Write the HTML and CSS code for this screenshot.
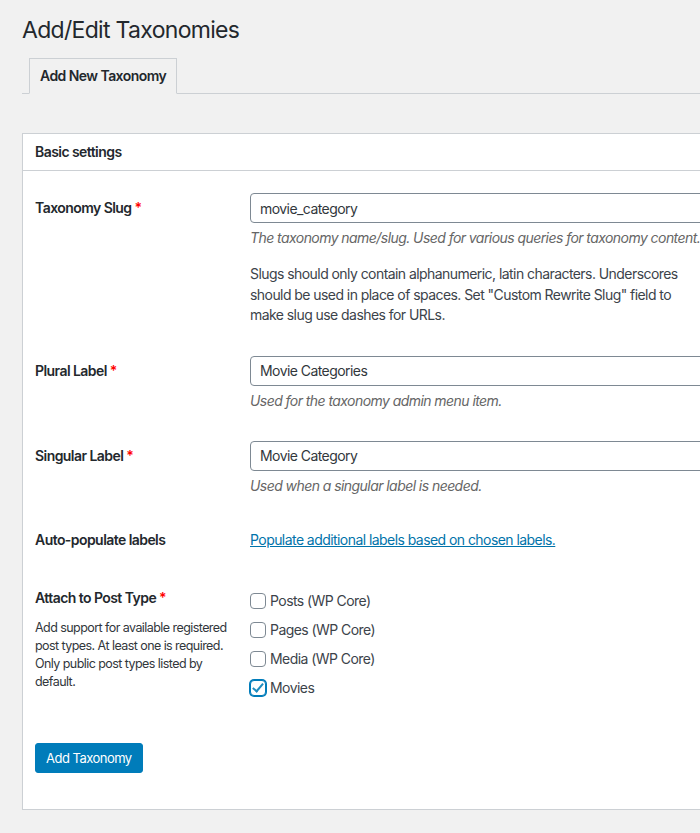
FILE: index.html
```html
<!DOCTYPE html>
<html lang="en">
<head>
  <meta charset="UTF-8">
  <title>Add/Edit Taxonomies</title>
  <link rel="stylesheet" href="styles.css">
</head>
<body>

<div class="wrap">
  <h1 class="page-title">Add/Edit Taxonomies</h1>

  <nav class="tabs">
    <a class="tab tab-active" href="#">Add New Taxonomy</a>
  </nav>

  <form class="panel">
    <h2 class="panel-head">Basic settings</h2>

    <div class="panel-body">
      <div class="row">
        <label class="row-label" for="slug">Taxonomy Slug <span class="required">*</span></label>
        <div class="row-field">
          <input class="text-input" id="slug" type="text" value="movie_category">
          <p class="desc">The taxonomy name/slug. Used for various queries for taxonomy content.</p>
          <p class="note">Slugs should only contain alphanumeric, latin characters. Underscores should be used in place of spaces. Set "Custom Rewrite Slug" field to make slug use dashes for URLs.</p>
        </div>
      </div>

      <div class="row">
        <label class="row-label" for="plural">Plural Label <span class="required">*</span></label>
        <div class="row-field">
          <input class="text-input" id="plural" type="text" value="Movie Categories">
          <p class="desc">Used for the taxonomy admin menu item.</p>
        </div>
      </div>

      <div class="row">
        <label class="row-label" for="singular">Singular Label <span class="required">*</span></label>
        <div class="row-field">
          <input class="text-input" id="singular" type="text" value="Movie Category">
          <p class="desc">Used when a singular label is needed.</p>
        </div>
      </div>

      <div class="row row-plain">
        <div class="row-label">Auto-populate labels</div>
        <div class="row-field">
          <a class="link" href="#">Populate additional labels based on chosen labels.</a>
        </div>
      </div>

      <div class="row row-types">
        <div class="row-label">
          <span>Attach to Post Type <span class="required">*</span></span>
          <p class="label-desc">Add support for available registered post types. At least one is required. Only public post types listed by default.</p>
        </div>
        <div class="row-field checks">
          <label class="check"><input type="checkbox"> Posts (WP Core)</label>
          <label class="check"><input type="checkbox"> Pages (WP Core)</label>
          <label class="check"><input type="checkbox"> Media (WP Core)</label>
          <label class="check"><input type="checkbox" class="focused" checked> Movies</label>
        </div>
      </div>
    </div>

    <div class="panel-foot">
      <button class="button-primary" type="button">Add Taxonomy</button>
    </div>
  </form>
</div>

</body>
</html>
```

FILE: styles.css
```css
* {
  box-sizing: border-box;
}

html, body {
  overflow: hidden;
}

body {
  margin: 0;
  background: #f1f1f1;
  color: #23282d;
  font-family: Inter, "Noto Sans", sans-serif;
  font-size: 14px;
  line-height: 20px;
  letter-spacing: -0.04em;
}

.wrap {
  width: 760px;
  margin-left: 22px;
  padding-top: 15px;
}

.page-title {
  margin: 0;
  font-size: 23px;
  font-weight: 400;
  line-height: 30px;
  letter-spacing: -0.03em;
  color: #23282d;
}

/* tabs */
.tabs {
  display: flex;
  padding: 13px 0 0 7px;
  border-bottom: 1px solid #ccd0d4;
}

.tab {
  padding: 5px 10px;
  margin-bottom: -1px;
  border: 1px solid #ccd0d4;
  background: #e5e5e5;
  color: #23282d;
  font-weight: 600;
  line-height: 24px;
  text-decoration: none;
}

.tab-active {
  background: #f1f1f1;
  border-bottom-color: #f1f1f1;
}

/* panel */
.panel {
  margin-top: 39px;
  background: #fff;
  border: 1px solid #ccd0d4;
  box-shadow: 0 1px 1px rgba(0, 0, 0, 0.04);
}

.panel-head {
  margin: 0;
  padding: 8px 12px;
  font-size: 14px;
  font-weight: 600;
  line-height: 20px;
  border-bottom: 1px solid #ccd0d4;
}

.panel-body {
  padding: 7px 12px 0;
}

.row {
  display: grid;
  grid-template-columns: 215px 1fr;
  padding: 15px 0;
}

.row-label {
  padding-top: 5px;
  font-weight: 600;
  line-height: 20px;
}

.required {
  color: #f00;
}

.text-input {
  display: block;
  width: 100%;
  height: 30px;
  margin: 0;
  padding: 0 9px;
  border: 1px solid #7e8993;
  border-radius: 4px;
  background: #fff;
  color: #32373c;
  font-family: inherit;
  font-size: 14px;
  line-height: 28px;
  letter-spacing: -0.04em;
}

.desc {
  margin: 5px 0 0;
  color: #666;
  font-style: italic;
}

.note {
  max-width: 450px;
  margin: 16px 0 0;
  line-height: 20.5px;
  color: #3c434a;
}

.row-plain .row-label,
.row-plain .row-field {
  padding-top: 4px;
}

.link {
  color: #0073aa;
  text-decoration: underline;
}

.row-types .row-label {
  padding-top: 8px;
}

.label-desc {
  margin: 11px 0 0;
  padding-right: 10px;
  font-size: 12.5px;
  font-weight: 400;
  line-height: 18px;
  letter-spacing: -0.045em;
  color: #32373c;
}

.checks {
  padding-top: 7px;
}

.check {
  display: flex;
  align-items: center;
  height: 29px;
  color: #3c434a;
}

.check input {
  appearance: none;
  position: relative;
  width: 16px;
  height: 16px;
  margin: 0 4px 0 0;
  border: 1px solid #7e8993;
  border-radius: 4px;
  background: #fff;
}

.check input:checked::before {
  content: '';
  position: absolute;
  left: 4px;
  top: 0;
  width: 4px;
  height: 9px;
  border-right: 2.5px solid #1e8cbe;
  border-bottom: 2.5px solid #1e8cbe;
  transform: rotate(40deg);
}

.check input.focused {
  border-color: #007cba;
  box-shadow: 0 0 0 1px #007cba;
}

/* footer */
.panel-foot {
  padding: 25px 12px 36px;
}

.button-primary {
  height: 30px;
  padding: 0 10px;
  border: 1px solid #007cba;
  border-radius: 3px;
  background: #007cba;
  color: #fff;
  font-family: inherit;
  font-size: 13px;
  line-height: 28px;
  letter-spacing: -0.04em;
}
```
